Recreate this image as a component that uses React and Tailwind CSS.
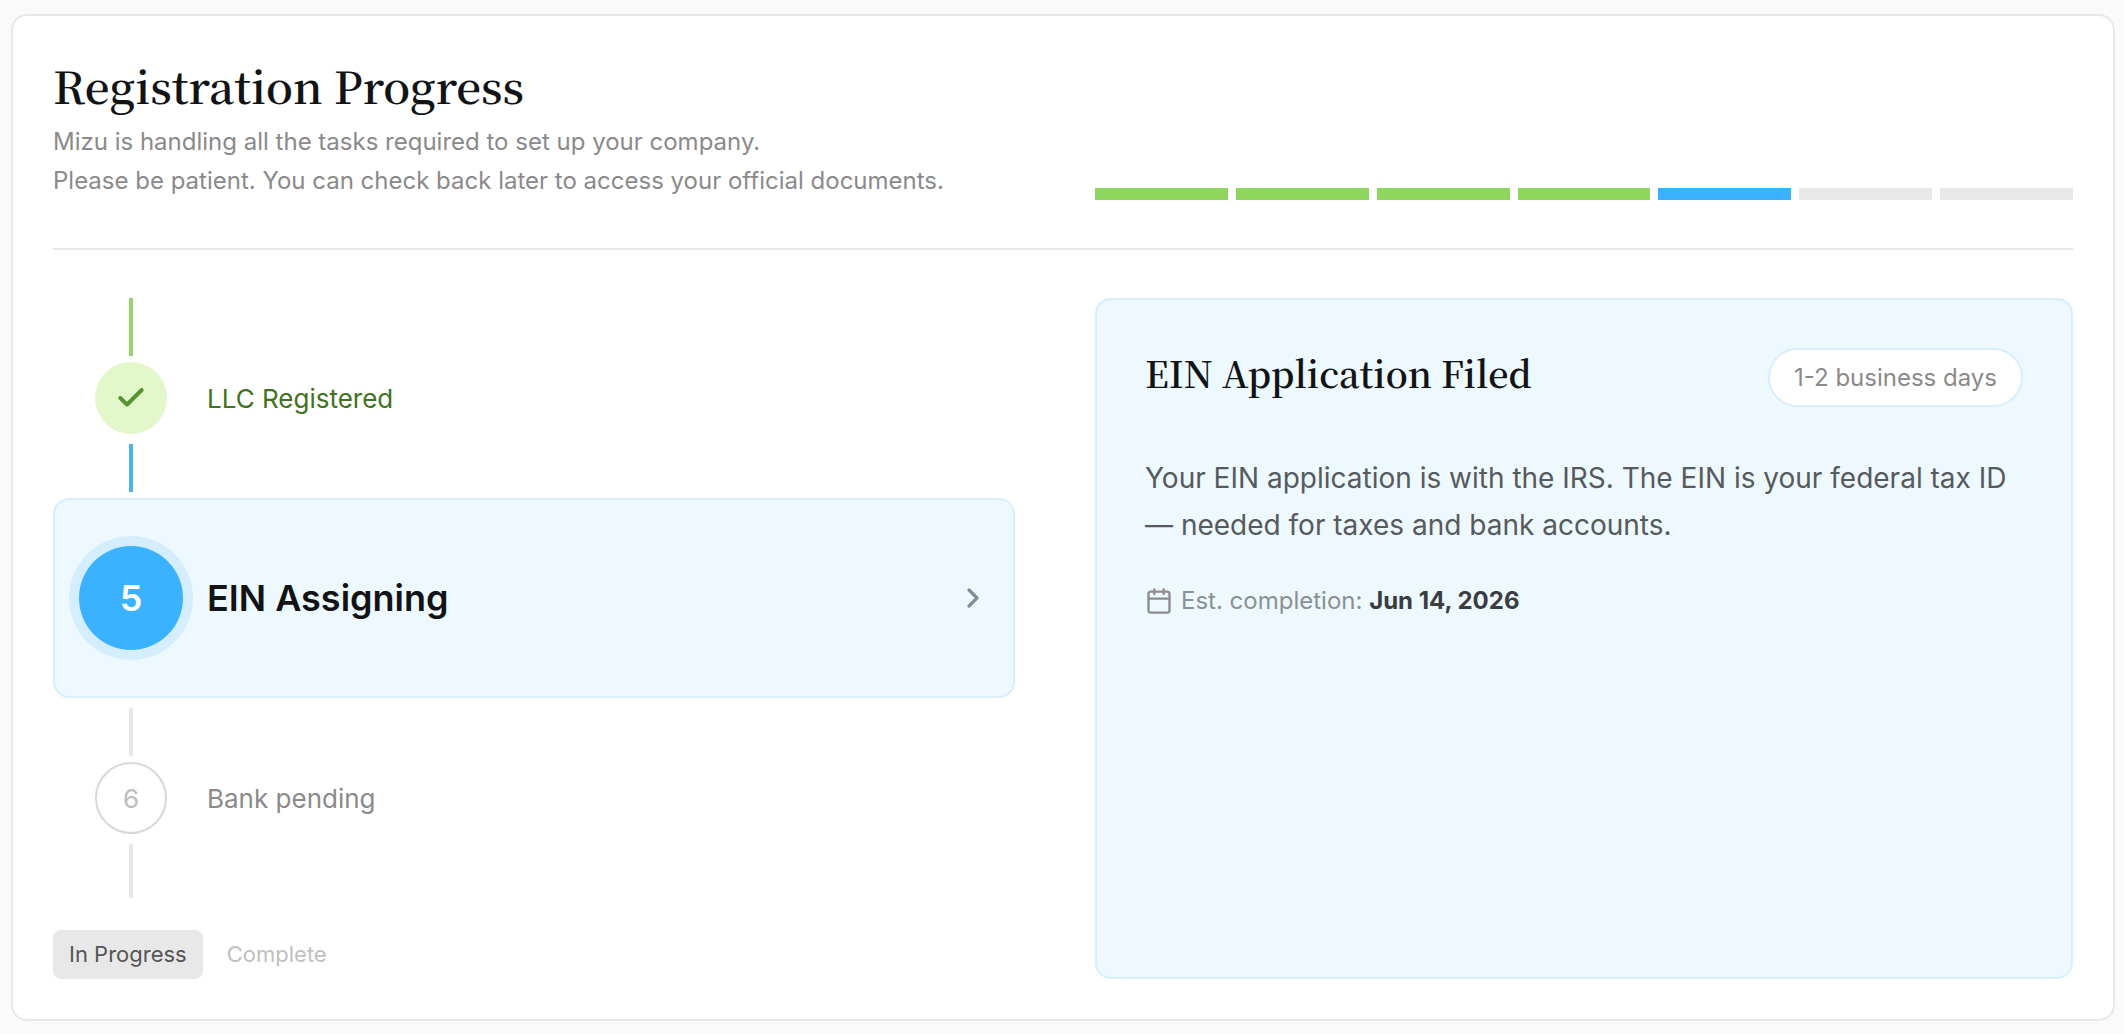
import React, { useState } from 'react';
import { Calendar, Check, ChevronRight } from 'lucide-react';

const segments = ['done', 'done', 'done', 'done', 'current', 'todo', 'todo'];

const segmentColors = {
  done: 'bg-[#8fd65f]',
  current: 'bg-[#3bb2ff]',
  todo: 'bg-[#e8e8e8]',
};

const tabs = ['In Progress', 'Complete'];

const serif = "font-['Noto_Serif_SC','Noto_Serif_CJK_SC','Source_Serif_4','Liberation_Serif',serif]";

function ProgressBar() {
  return (
    <div className="flex gap-2" role="img" aria-label="Step 5 of 7">
      {segments.map((state, i) => (
        <span key={i} className={`h-3 flex-1 ${segmentColors[state]}`} />
      ))}
    </div>
  );
}

function CompletedStep({ label }) {
  return (
    <li className="flex h-[200px] items-stretch gap-6 px-[26px]">
      <div className="flex w-[104px] flex-col items-center">
        <span className="w-1 flex-1 bg-[#95d46a]" />
        <span className="mt-1.5 mb-2.5 flex size-[72px] items-center justify-center rounded-full bg-[#e2f8ca] text-[#55932f]">
          <Check size={32} strokeWidth={3} />
        </span>
        <span className="mb-1.5 h-12 w-1 bg-[#4bb3f0]" />
      </div>
      <span className="self-center text-[26px] leading-[39px] text-[#3f7222]">{label}</span>
    </li>
  );
}

function ActiveStep({ number, label }) {
  return (
    <li>
      <button
        type="button"
        className="flex h-[200px] w-full items-center gap-6 rounded-2xl border-2 border-[#d9eefd] bg-[#edf8ff] px-6 text-left"
      >
        <span className="flex size-[104px] items-center justify-center rounded-full bg-[#3bb2ff] text-4xl font-semibold text-white ring-[10px] ring-[#d5eefe]">
          {number}
        </span>
        <span className="flex-1 text-4xl font-semibold text-[#111315]">{label}</span>
        <ChevronRight size={32} strokeWidth={2.4} className="text-[#868c92]" />
      </button>
    </li>
  );
}

function PendingStep({ number, label }) {
  return (
    <li className="flex h-[200px] items-stretch gap-6 px-[26px]">
      <div className="flex w-[104px] flex-col items-center">
        <span className="mt-2.5 h-12 w-1 bg-[#e8e8e8]" />
        <span className="mt-1.5 mb-2.5 flex size-[72px] items-center justify-center rounded-full border-2 border-[#d8d8d8] text-[26px] text-[#bdbdbd]">
          {number}
        </span>
        <span className="w-1 flex-1 bg-[#e8e8e8]" />
      </div>
      <span className="self-center text-[26px] leading-[39px] text-[#8a8a8a]">{label}</span>
    </li>
  );
}

function StepDetail() {
  return (
    <section className="rounded-2xl border-2 border-[#d9eefd] bg-[#edf8ff] p-12">
      <div className="flex items-start justify-between">
        <h2 className={`text-4xl leading-[50px] font-semibold text-[#111315] ${serif}`}>EIN Application Filed</h2>
        <span className="rounded-full border-2 border-[#d9eefd] bg-white px-6 py-2 text-2xl leading-[39px] text-[#8a8a8a]">
          1-2 business days
        </span>
      </div>
      <p className="mt-12 text-[28px] leading-[47px] text-[#565a5d]">
        Your EIN application is with the IRS. The EIN is your federal tax ID — needed for taxes and bank accounts.
      </p>
      <p className="mt-8 flex items-center gap-2 text-2xl leading-[39px] text-[#8c9093]">
        <Calendar size={28} className="text-[#8c8c8f]" />
        <span>
          Est. completion: <strong className="font-bold text-[#3a3d40]">Jun 14, 2026</strong>
        </span>
      </p>
    </section>
  );
}

export default function App() {
  const [tab, setTab] = useState('In Progress');

  return (
    <main className="min-h-screen bg-[#fafafa] pt-3.5 pr-[9px] pb-3 pl-[11px] font-['Inter',sans-serif]">
      <div className="rounded-2xl border-2 border-[#e8e8e8] bg-white p-10">
        <header className="grid grid-cols-[481fr_489fr] items-end gap-20 border-b-2 border-[#e8e8e8] pb-12">
          <div>
            <h1 className={`mb-2 text-[44px] leading-[58px] font-semibold text-[#111315] ${serif}`}>Registration Progress</h1>
            <p className="text-2xl leading-[39px] text-[#8a8a8a]">
              Mizu is handling all the tasks required to set up your company.
              <br />
              Please be patient. You can check back later to access your official documents.
            </p>
          </div>
          <ProgressBar />
        </header>

        <div className="mt-12 grid grid-cols-[481fr_489fr] gap-20">
          <div>
            <ol>
              <CompletedStep label="LLC Registered" />
              <ActiveStep number={5} label="EIN Assigning" />
              <PendingStep number={6} label="Bank pending" />
            </ol>
            <div className="mt-8 flex gap-2">
              {tabs.map((name) => (
                <button
                  key={name}
                  type="button"
                  aria-pressed={tab === name}
                  onClick={() => setTab(name)}
                  className={`rounded-lg px-4 py-2 text-[22px] leading-[33px] ${tab === name ? 'bg-[#e8e8e8] text-[#555555]' : 'text-[#c0c0c0]'}`}
                >
                  {name}
                </button>
              ))}
            </div>
          </div>
          <StepDetail />
        </div>
      </div>
    </main>
  );
}
